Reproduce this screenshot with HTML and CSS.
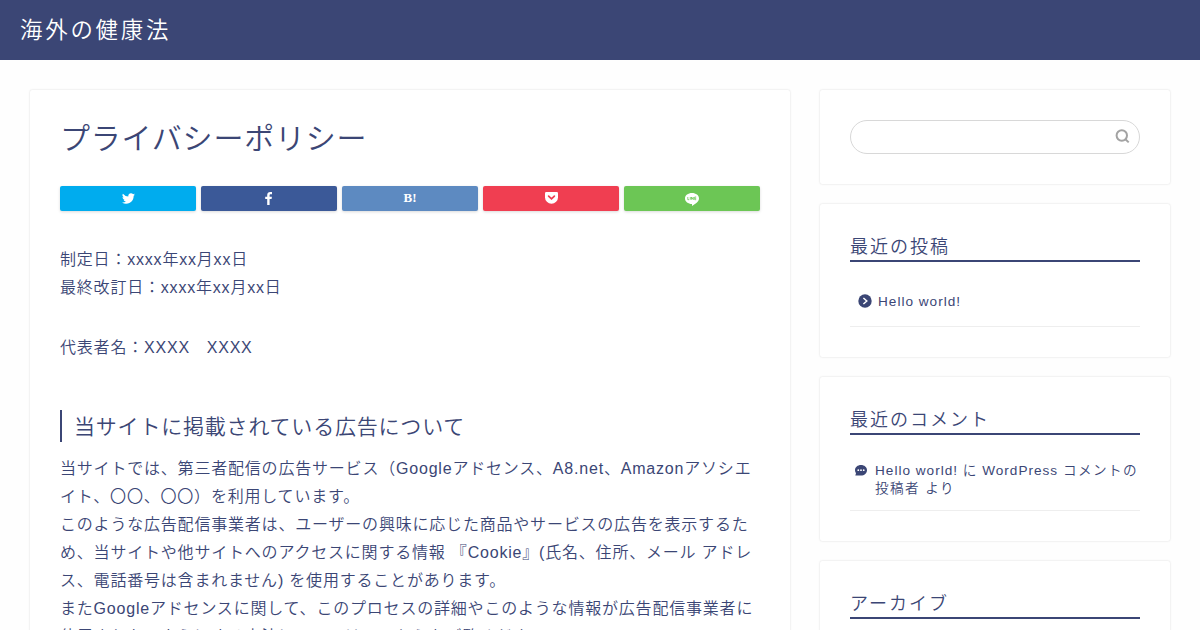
FILE: index.html
```html
<!DOCTYPE html>
<html lang="ja">
<head>
<meta charset="utf-8">
<title>プライバシーポリシー</title>
<link rel="stylesheet" href="styles.css">
</head>
<body>
<header class="site-header"><a class="logo">海外の健康法</a></header>
<div class="layout">
  <main class="card article">
    <h1 class="title">プライバシーポリシー</h1>
    <ul class="share">
      <li class="share-btn twitter"><svg width="13" height="13" viewBox="0 0 24 24"><path d="M24 4.6a10 10 0 0 1-2.8.8 5 5 0 0 0 2.1-2.7 10 10 0 0 1-3.1 1.2 4.9 4.9 0 0 0-8.4 4.5A14 14 0 0 1 1.700 3.150a4.900 4.900 0 0 0 1.500 6.600 5 5 0 0 1-2.200-.6c0 2.300 1.600 4.400 3.900 4.900a5 5 0 0 1-2.200.1 4.900 4.900 0 0 0 4.600 3.400A9.900 9.900 0 0 1 0 19.500a14 14 0 0 0 21.500-12.400A10 10 0 0 0 24 4.600z"/></svg></li>
      <li class="share-btn facebook"><svg width="8" height="13" viewBox="0 0 8 13"><path d="M7 .1v2.100H5.700c-.9 0-1.100.4-1.100 1.100v1.400h2.300L6.600 7h-2v6H2.200V7h-2V4.700h2V3C2.200 1.100 3.400 0 5.200 0 6 0 6.800.1 7 .1z"/></svg></li>
      <li class="share-btn hatena">B!</li>
      <li class="share-btn pocket"><svg width="13" height="12" viewBox="0 0 13 12"><path d="M1.200 0h10.600Q13 0 13 1.200v4A6.500 6.500 0 0 1 0 5.200v-4Q0 0 1.200 0z"/><path class="chevron" d="M3.600 4.100 6.500 6.900l2.900-2.800"/></svg></li>
      <li class="share-btn line"><svg width="14" height="13" viewBox="0 0 14 13"><path d="M7 0c3.900 0 7 2.400 7 5.400 0 2-1.500 3.700-3.300 5.100L7 13v-2.100c-3.900 0-7-2.400-7-5.500S3.100 0 7 0z"/><path class="line-mark" d="M2.800 4v2.700h1.400M5.300 4v2.700M6.500 6.700V4l1.800 2.700V4M11.200 4H9.700v2.700h1.500M9.700 5.300h1.500"/></svg></li>
    </ul>
    <div class="content">
      <p>制定日：xxxx年xx月xx日<br>最終改訂日：xxxx年xx月xx日</p>
      <p>代表者名：XXXX　XXXX</p>
      <h2 class="heading">当サイトに掲載されている広告について</h2>
      <p>当サイトでは、第三者配信の広告サービス（Googleアドセンス、A8.net、Amazonアソシエ<br>イト、〇〇、〇〇）を利用しています。<br>このような広告配信事業者は、ユーザーの興味に応じた商品やサービスの広告を表示するた<br>め、当サイトや他サイトへのアクセスに関する情報 『Cookie』(氏名、住所、メール アドレ<br>ス、電話番号は含まれません) を使用することがあります。<br>またGoogleアドセンスに関して、このプロセスの詳細やこのような情報が広告配信事業者に<br>使用されないようにする方法については、こちらをご覧ください。</p>
    </div>
  </main>
  <aside class="sidebar">
    <section class="card widget">
      <form class="search"><input class="search-input" type="text" aria-label="検索"><svg width="15" height="15" viewBox="0 0 15 15"><circle cx="6.800" cy="6.500" r="5.200"/><path d="m10.400 10.200 3.300 3.200"/></svg></form>
    </section>
    <section class="card widget">
      <h3 class="widget-title">最近の投稿</h3>
      <a class="post"><svg width="14" height="14" viewBox="0 0 14 14"><circle cx="7" cy="7" r="6.700"/><path d="m5.400 4 3.400 3-3.400 3"/></svg>Hello world!</a>
    </section>
    <section class="card widget">
      <h3 class="widget-title">最近のコメント</h3>
      <div class="comment"><svg width="12" height="11" viewBox="0 0 12 11"><path d="M6 0c3.300 0 6 2.200 6 5.200s-2.700 5.300-6 5.300H.3L1 8.200A5 5 0 0 1 0 5.200C0 2.200 2.700 0 6 0z"/><g><circle cx="3.300" cy="5.200" r=".9"/><circle cx="6" cy="5.200" r=".9"/><circle cx="8.700" cy="5.200" r=".9"/></g></svg><span>Hello world! に WordPress <span class="author">コメントの<br>投稿者 より</span></span></div>
    </section>
    <section class="card widget">
      <h3 class="widget-title">アーカイブ</h3>
    </section>
  </aside>
</div>
</body>
</html>
```
FILE: styles.css
```css
* { box-sizing: border-box; }
html, body { height: 630px; overflow: hidden; }
body {
  margin: 0;
  background: #fefefe;
  color: #3b4675;
  font: 350 16px/28px "Liberation Sans", "Noto Sans CJK JP DemiLight", "Noto Sans CJK JP", sans-serif;
  letter-spacing: .8px;
}
.site-header {
  display: flex;
  align-items: center;
  height: 60px;
  padding: 2px 20px 0;
  background: #3b4675;
}
.logo { color: #fff; font-size: 22.4px; font-weight: 300; letter-spacing: 2.8px; }
.layout { display: flex; align-items: flex-start; gap: 30px; padding: 30px; }
.card {
  background: #fff;
  border-radius: 2px;
  box-shadow: 0 0 2px rgba(0, 0, 0, .17);
}
.article { width: 760px; padding: 30px; }
.title { margin: 0; padding-top: 1px; font-size: 30px; font-weight: 350; line-height: 36px; }
.share { display: flex; gap: 5px; margin: 29px 0 35px; padding: 0; list-style: none; }
.share-btn {
  display: flex;
  flex: 1;
  align-items: center;
  justify-content: center;
  height: 25px;
  border-radius: 2px;
  box-shadow: 0 1px 3px rgba(0, 0, 0, .15);
  color: #fff;
}
.share-btn svg { fill: #fff; }
.twitter { background: #00acee; }
.facebook { background: #3b5998; }
.hatena { background: #5d8ac1; padding-bottom: 1px; font: bold 13px/24px "Liberation Serif", serif; letter-spacing: 0; }
.pocket { background: #f03e51; padding-bottom: 1px; }
.line { background: #6cc655; padding-top: 1px; }
.share-btn .chevron { fill: none; stroke: #f03e51; stroke-width: 1.7; stroke-linecap: round; }
.share-btn .line-mark { fill: none; stroke: #6cc655; stroke-width: .8; }
.content p { margin: 0 0 32px; white-space: nowrap; }
.heading {
  margin: 48px 0 13px;
  padding-left: 12px;
  border-left: 2px solid #3b4675;
  font-size: 21px;
  font-weight: 350;
  line-height: 33px;
  height: 32px;
}
.sidebar { display: flex; flex-direction: column; gap: 20px; width: 350px; }
.widget { padding: 30px; }
.search {
  display: flex;
  align-items: center;
  height: 34px;
  padding: 0 9px 1px 16px;
  border: 1px solid #d8d8d8;
  border-radius: 17px;
}
.search-input { flex: 1; min-width: 0; border: 0; outline: 0; background: none; }
.search svg { fill: none; stroke: #a3a3a3; stroke-width: 2; }
.widget-title {
  height: 28px;
  margin: 0 0 15px;
  border-bottom: 2px solid #3b4675;
  font-size: 18px;
  font-weight: 350;
  line-height: 26px;
  letter-spacing: 2px;
}
.post {
  display: flex;
  align-items: center;
  gap: 6px;
  height: 50px;
  padding-left: 8px;
  border-bottom: 1px solid #eee;
  font-size: 13.6px;
  letter-spacing: 1px;
}
.post svg, .comment svg { flex: none; fill: #3b4675; }
.post svg { margin-bottom: 1px; }
.post svg path { fill: none; stroke: #fff; stroke-width: 1.5; }
.comment {
  display: flex;
  gap: 8px;
  height: 61px;
  padding: 12px 0 0 5px;
  border-bottom: 1px solid #eee;
  font-size: 13.6px;
  line-height: 18px;
  letter-spacing: 1px;
  white-space: nowrap;
}
.author { letter-spacing: 1.4px; }
.comment svg { margin-top: 3px; }
.comment g { fill: #fff; }
```
